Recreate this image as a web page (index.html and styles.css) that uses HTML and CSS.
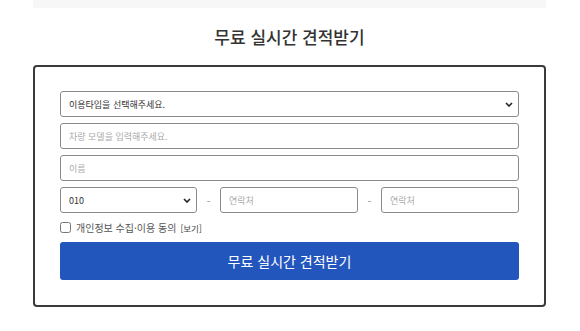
FILE: index.html
```html
<!DOCTYPE html>
<html lang="ko">
<head>
    <meta charset="UTF-8">
    <meta name="viewport" content="width=device-width, initial-scale=1.0">
    <title>무료 실시간 견적받기</title>
    <link rel="stylesheet" href="styles.css">
</head>
<body>
    <div class="wrap">
        <div class="topBar"></div>

        <h2 class="title">무료 실시간 견적받기</h2>

        <form action="javascript:void(0);" class="quoteBox">
            <select class="field selectField" name="type">
                <option>이용타입을 선택해주세요.</option>
            </select>
            <input class="field" type="text" name="model" placeholder="차량 모델을 입력해주세요.">
            <input class="field" type="text" name="name" placeholder="이름">

            <div class="phoneRow">
                <select class="field selectField phoneFirst" name="tel1">
                    <option>010</option>
                </select>
                <span class="dash">-</span>
                <input class="field" type="text" name="tel2" placeholder="연락처">
                <span class="dash">-</span>
                <input class="field" type="text" name="tel3" placeholder="연락처">
            </div>

            <label class="agree">
                <input type="checkbox" name="agree">
                <span>개인정보 수집·이용 동의</span>
                <span class="view">[보기]</span>
            </label>

            <button class="submitBtn">무료 실시간 견적받기</button>
        </form>
    </div>
</body>
</html>
```

FILE: styles.css
```css
body{
    margin: 0;
    background-color: #fff;
    font-family: "Noto Sans CJK KR", "Noto Sans", sans-serif;
    color: #333;
}

.wrap{
    width: 513px;
    margin-left: 33px;
}

.topBar{
    height: 8px;
    background-color: #f7f7f7;
}

.title{
    margin: 17px 0 0;
    height: 40px;
    font-size: 17px;
    font-weight: 500;
    line-height: 24px;
    text-align: center;
    color: #333;
}

.quoteBox{
    border: 2px solid #3a3a3a;
    border-radius: 4px;
    padding: 24px 25px 25px 25px;
    display: flex;
    flex-direction: column;
    gap: 6px;
}

.field{
    box-sizing: border-box;
    height: 26px;
    border: 1px solid #8a8a8a;
    border-radius: 3px;
    padding: 0 8px;
    font-family: "Noto Sans CJK KR", "Noto Sans", sans-serif;
    font-size: 9px;
    color: #333;
    background-color: #fff;
    outline: none;
}

.field::placeholder{
    color: #aaa;
}

.selectField{
    appearance: none;
    background-image: url("data:image/svg+xml;utf8,<svg xmlns='http://www.w3.org/2000/svg' width='8' height='5' viewBox='0 0 8 5'><path d='M1 1l3 3 3-3' fill='none' stroke='%23222' stroke-width='1.6'/></svg>");
    background-repeat: no-repeat;
    background-position: right 5px center;
}

.phoneRow{
    display: flex;
    align-items: center;
}

.phoneRow .field{
    width: 138px;
}

.phoneRow .phoneFirst{
    width: 137px;
}

.dash{
    width: 23px;
    text-align: center;
    font-size: 10px;
    color: #888;
}

.agree{
    display: flex;
    align-items: center;
    gap: 4px;
    height: 17px;
    font-size: 10px;
    color: #555;
}

.agree input{
    margin: 0 1px 0 0;
    width: 11px;
    height: 11px;
}

.agree .view{
    font-size: 8.5px;
    color: #444;
}

.submitBtn{
    height: 38px;
    border: none;
    border-radius: 3px;
    background-color: #2356bd;
    color: #fff;
    font-family: "Noto Sans CJK KR", "Noto Sans", sans-serif;
    font-size: 14px;
}
```
